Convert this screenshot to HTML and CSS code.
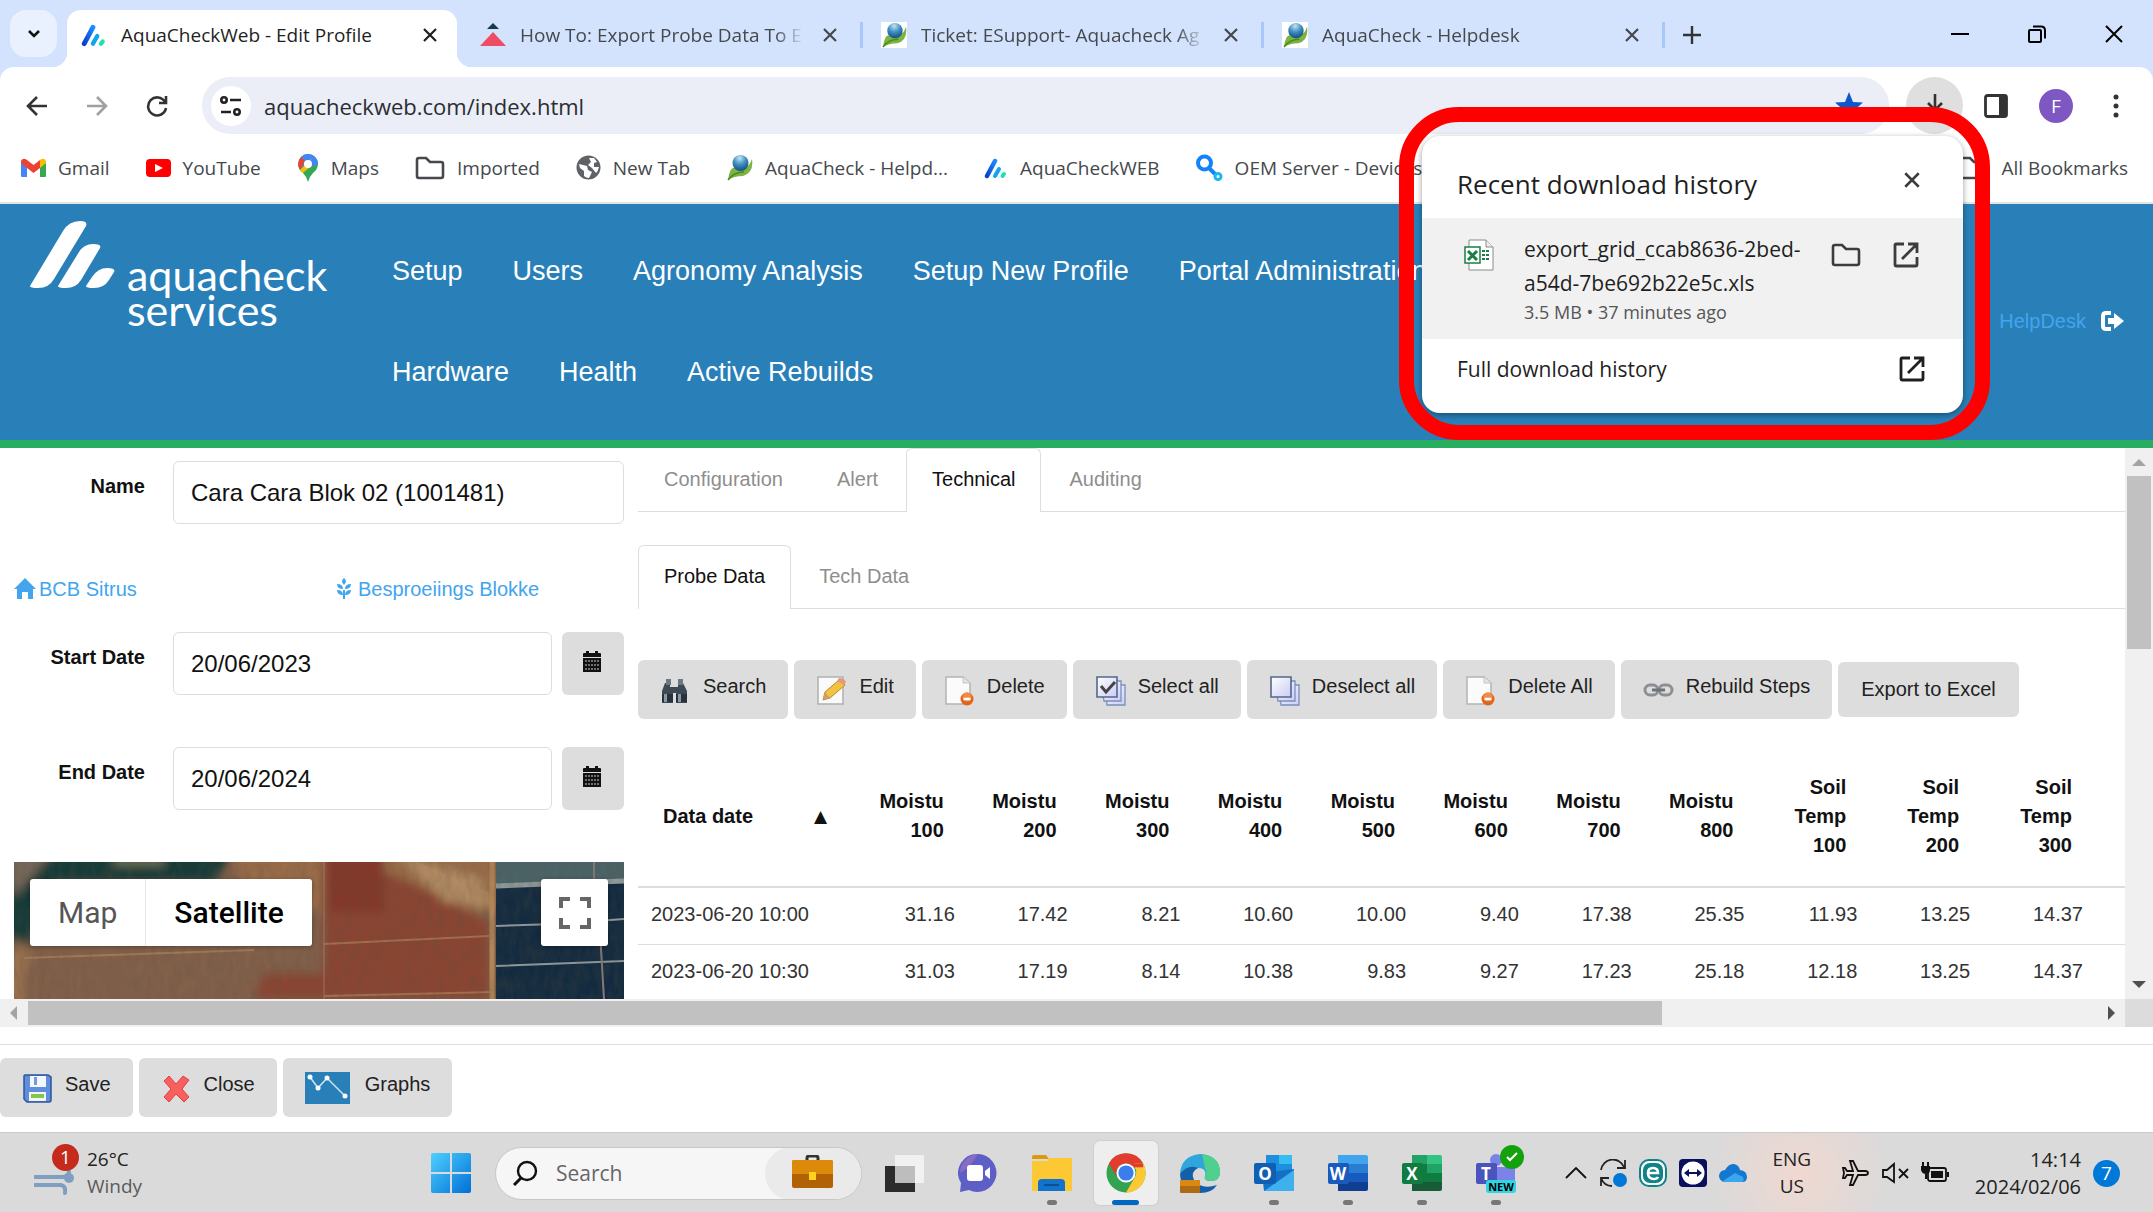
FILE: index.html
```html
<!DOCTYPE html>
<html lang="en">
<head>
    <meta charset="UTF-8">
    <meta name="viewport" content="width=device-width, initial-scale=1.0">
    <title>AquaCheckWeb - Edit Profile</title>
    <link rel="stylesheet" href="styles.css">
</head>
<body>
    <!-- shared icons -->
    <svg class="defs" width="0" height="0" aria-hidden="true">
        <defs>
            <linearGradient id="gBlue" x1="0" y1="1" x2="1" y2="0"><stop offset="0" stop-color="#0a3fd0"/><stop offset="1" stop-color="#1a8cff"/></linearGradient>
            <linearGradient id="gWin" x1="0" y1="0" x2="1" y2="1"><stop offset="0" stop-color="#4fd0ff"/><stop offset="1" stop-color="#0070d6"/></linearGradient>
            <linearGradient id="gPage" x1="0" y1="0" x2="1" y2="1"><stop offset="0" stop-color="#ffffff"/><stop offset="1" stop-color="#c9ccf5"/></linearGradient>
            <radialGradient id="gLeaf" cx=".45" cy=".2" r=".8"><stop offset="0" stop-color="#c4e4f2"/><stop offset=".5" stop-color="#3f8fc0"/><stop offset="1" stop-color="#124e80"/></radialGradient>
        </defs>
        <symbol id="x" viewBox="0 0 16 16"><path d="M2 2l12 12M14 2L2 14" fill="none" stroke="currentColor" stroke-width="2.2"/></symbol>
        <symbol id="folder" viewBox="0 0 30 24"><path d="M2 4q0-2 2-2h7l4 4h11q2 0 2 2v12q0 2-2 2H4q-2 0-2-2z" fill="none" stroke="currentColor" stroke-width="2.6"/></symbol>
        <symbol id="open" viewBox="0 0 28 28"><path d="M12 3H4q-1 0-1 1v20q0 1 1 1h20q1 0 1-1v-8M16 3h9v9M25 3L10 18" fill="none" stroke="currentColor" stroke-width="2.8"/></symbol>
        <symbol id="aqua" viewBox="0 0 24 22"><path d="M3 19L11 4" stroke="url(#gBlue)" stroke-width="4.5" stroke-linecap="round"/><path d="M11 19l4-7" stroke="#10a5ee" stroke-width="4" stroke-linecap="round"/><path d="M18.500 19l1.500-2" stroke="#1fe0b0" stroke-width="4" stroke-linecap="round"/></symbol>
        <symbol id="leaf" viewBox="0 0 27 27"><path d="M2 26Q4 12 9 14Q22 18 26 5Q28 19 17 22Q8 22 2 26z" fill="#7cb342"/><path d="M2 26Q8 18 18 18" stroke="#4b8a22" fill="none" stroke-width="1.500"/><ellipse cx="14.500" cy="9" rx="8" ry="8" fill="url(#gLeaf)"/></symbol>
        <symbol id="pageDel" viewBox="0 0 32 32"><path d="M2 3h17l7 6v21H2z" fill="#fbfbfb" stroke="#b4b4b4" stroke-width="1.500"/><path d="M19 3v6h7" fill="#e4e4e4" stroke="#c4c4c4"/><circle cx="23" cy="25" r="6.500" fill="#e0641a"/><circle cx="23" cy="23" r="4.500" fill="#f08c44"/><path d="M19.500 25h7" stroke="#fff" stroke-width="2.500"/></symbol>
        <symbol id="pages" viewBox="0 0 32 32"><g fill="url(#gPage)" stroke="#7a8fc0" stroke-width="1.300"><path d="M10 11h20v20H12z"/><path d="M6 7h20v20H9z"/><path d="M2 3h20v20H2z" stroke="#56678c" stroke-width="1.600"/></g></symbol>
        <symbol id="cal" viewBox="0 0 20 22"><path d="M1 3q0-1 1-1h2V0h3v2h6V0h3v2h2q1 0 1 1v3H1zM1 7h18v14H1z" fill="#111"/><path d="M3 10h14M3 14h14M3 18h14" stroke="#ccc" stroke-width="1" stroke-dasharray="2 1"/></symbol>
    </svg>

    <div class="tab-strip">
        <button class="tab-search" aria-label="Search tabs"><svg width="16" height="16" viewBox="0 0 16 16"><path d="M3 5l5 5 5-5" fill="none" stroke="#111" stroke-width="2.600"/></svg></button>
        <div class="tab active">
            <svg class="favicon"><use href="#aqua"/></svg>
            <span class="tab-title">AquaCheckWeb - Edit Profile</span>
            <button class="tab-close" aria-label="Close tab"><svg><use href="#x"/></svg></button>
        </div>
        <div class="tab">
            <svg class="favicon" viewBox="0 0 26 26"><path d="M13 1l6 6H7z" fill="#123c4a"/><path d="M13 10l13 14H0z" fill="#ee4b64"/></svg>
            <span class="tab-title">How To: Export Probe Data To E</span>
            <button class="tab-close" aria-label="Close tab"><svg><use href="#x"/></svg></button>
        </div>
        <div class="tab">
            <svg class="favicon white"><use href="#leaf"/></svg>
            <span class="tab-title">Ticket: ESupport- Aquacheck Ag</span>
            <button class="tab-close" aria-label="Close tab"><svg><use href="#x"/></svg></button>
        </div>
        <div class="tab">
            <svg class="favicon white"><use href="#leaf"/></svg>
            <span class="tab-title">AquaCheck - Helpdesk</span>
            <button class="tab-close" aria-label="Close tab"><svg><use href="#x"/></svg></button>
        </div>
        <button class="new-tab" aria-label="New tab"><svg width="18" height="18" viewBox="0 0 18 18"><path d="M9 0v18M0 9h18" stroke="#333" stroke-width="2.400"/></svg></button>
        <div class="window-controls">
            <button aria-label="Minimize"><svg viewBox="0 0 18 18"><path d="M0 9h18" stroke="#000" stroke-width="2"/></svg></button>
            <button aria-label="Restore"><svg viewBox="0 0 18 18"><path d="M2 5h10q1 0 1 1v10q0 1-1 1H3q-2 0-2-1V6q0-1 1-1zM5 1.500h8q4 0 4 4v8" fill="none" stroke="#000" stroke-width="2"/></svg></button>
            <button aria-label="Close"><svg viewBox="0 0 18 18"><path d="M1 1l16 16M17 1L1 17" stroke="#000" stroke-width="2"/></svg></button>
        </div>
    </div>

    <div class="toolbar">
        <div class="nav-buttons">
            <button aria-label="Back"><svg viewBox="0 0 22 22"><path d="M21 11H2M11 2l-9 9 9 9" fill="none" stroke="#333" stroke-width="2.600"/></svg></button>
            <button aria-label="Forward"><svg viewBox="0 0 22 22"><path d="M1 11h19M11 2l9 9-9 9" fill="none" stroke="#a0a0a0" stroke-width="2.600"/></svg></button>
            <button aria-label="Reload"><svg viewBox="0 0 22 22"><path d="M19 7A9 9 0 1 0 20 13M20 1v7h-7" fill="none" stroke="#333" stroke-width="2.600"/></svg></button>
        </div>
        <div class="omnibox">
            <span class="site-info"><svg width="22" height="20" viewBox="0 0 22 20"><g fill="none" stroke="#222" stroke-width="2.600"><circle cx="4" cy="4" r="2.700"/><path d="M10 4h11M1 16h10"/><circle cx="17" cy="16" r="2.700"/></g></svg></span>
            <input type="text" value="aquacheckweb.com/index.html" aria-label="Address">
            <svg class="star" viewBox="0 0 28 28"><path d="M14 0l4 10 10 .5-8 7 3 10.500-9-6-9 6 3-10.500-8-7L10 10z" fill="#0b57d0"/></svg>
        </div>
        <button class="download-btn" aria-label="Downloads"><svg width="22" height="28" viewBox="0 0 22 28"><path d="M11 2v16M4 11l7 7 7-7" fill="none" stroke="#333" stroke-width="2.600"/></svg></button>
        <button class="panel-btn" aria-label="Side panel"><svg width="24" height="24" viewBox="0 0 24 24"><rect x="1.500" y="1.500" width="21" height="21" rx="2" fill="none" stroke="#333" stroke-width="2.800"/><path d="M15 1h8v22h-8z" fill="#333"/></svg></button>
        <button class="avatar" aria-label="Profile">F</button>
        <button class="menu-btn" aria-label="Menu"><svg width="6" height="24" viewBox="0 0 6 24"><g fill="#333"><circle cx="3" cy="3" r="2.500"/><circle cx="3" cy="12" r="2.500"/><circle cx="3" cy="21" r="2.500"/></g></svg></button>
    </div>

    <div class="bookmarks">
        <a href="#"><svg width="25" height="20" viewBox="0 0 25 20"><path d="M0 3v15q0 1 1 1h5V9z" fill="#4285f4"/><path d="M25 3v15q0 1-1 1h-5V9z" fill="#34a853"/><path d="M19 2v8l6-5V3q-2-4-6-1z" fill="#fbbc04"/><path d="M0 5V3q2-4 6-1l6.500 5L19 2v8l-6.500 5L6 10z" fill="#ea4335"/></svg>Gmail</a>
        <a href="#"><svg width="25" height="18" viewBox="0 0 25 18"><rect width="25" height="18" rx="4" fill="#f00"/><path d="M9 5l8 4-8 4z" fill="#fff"/></svg>YouTube</a>
        <a href="#"><svg width="22" height="28" viewBox="0 0 20 28"><path d="M10 0a10 10 0 0 1 10 10q0 5-5 9-4 4-5 9-1-5-5-9-5-4-5-9A10 10 0 0 1 10 0z" fill="#34a853"/><path d="M3 3a10 10 0 0 1 13-1L6 14z" fill="#4285f4"/><path d="M3 3l4 4-5 9Q-2 9 3 3z" fill="#ea4335"/><path d="M2 16L14 4l-2 9-7 6z" fill="#fbbc04"/><path d="M16 2L10 9l4 4 6-3q0-5-4-8z" fill="#4285f4"/><circle cx="10" cy="10" r="4" fill="#fff"/></svg>Maps</a>
        <a href="#"><svg width="30" height="24" class="dark"><use href="#folder"/></svg>Imported</a>
        <a href="#"><svg width="25" height="25" viewBox="0 0 25 25"><circle cx="12.500" cy="12.500" r="12" fill="#5f6368"/><path d="M3 9l8 2 1 4 4 2-3 6q-3 0-5-2v-5l-4-3zM13 3h5l3 4-3 1v4h5q-1 4-3 6l-4-5-4-3 3-3z" fill="#fff"/></svg>New Tab</a>
        <a href="#"><svg width="27" height="27"><use href="#leaf"/></svg>AquaCheck - Helpd...</a>
        <a href="#"><svg width="24" height="22"><use href="#aqua"/></svg>AquaCheckWEB</a>
        <a href="#"><svg width="27" height="27" viewBox="0 0 27 27"><g fill="none" stroke="#1583f7"><circle cx="8.500" cy="9" r="6.500" stroke-width="4"/><path d="M13 14l6 6" stroke-width="4"/><circle cx="22" cy="22.500" r="3" stroke="#18b8f4" stroke-width="3"/></g></svg>OEM Server - Devices</a>
        <a href="#" class="all-bookmarks"><svg width="30" height="24" class="dark"><use href="#folder"/></svg>All Bookmarks</a>
    </div>

    <header class="site-header">
        <a href="#" class="logo">
            <svg width="85" height="68" viewBox="0 0 85 68"><g fill="#fff"><path d="M0 65L33 10Q39 0 50 0q8 0 6 5L24 58q-5 9-16 9-8 0-8-2z"/><path d="M28 65L49 31q5-8 14-8 9 0 7 4L51 59q-5 8-15 8-8 0-8-2z"/><path d="M56 65l6-9q6-9 15-9 9 0 7 4l-5 8q-5 8-15 8-8 0-8-2z"/></g></svg>
            <span class="logo-text">aquacheck<br>services</span>
        </a>
        <nav class="main-nav">
            <a href="#">Setup</a>
            <a href="#">Users</a>
            <a href="#">Agronomy Analysis</a>
            <a href="#">Setup New Profile</a>
            <a href="#">Portal Administration</a>
            <a href="#">Hardware</a>
            <a href="#">Health</a>
            <a href="#">Active Rebuilds</a>
        </nav>
        <div class="user-links">
            <a href="#">HelpDesk</a>
            <a href="#" aria-label="Log out"><svg width="23" height="20" viewBox="0 0 23 20"><path d="M10 2H5Q2 2 2 5v10q0 3 3 3h5" fill="none" stroke="#fff" stroke-width="4"/><path d="M7 7h6V2l10 8-10 8v-5H7z" fill="#fff"/></svg></a>
        </div>
    </header>

    <div class="workspace">
        <main class="content">
            <section class="profile-form">
                <div class="form-row">
                    <label for="name">Name</label>
                    <input id="name" type="text" value="Cara Cara Blok 02 (1001481)">
                </div>
                <div class="crumbs">
                    <a href="#"><svg width="22" height="21" viewBox="0 0 22 21"><path d="M11 0l11 11h-3v10h-5v-7H8v7H3V11H0z" fill="#42a5ee"/></svg>BCB Sitrus</a>
                    <a href="#" class="block-link"><svg width="14" height="21" viewBox="0 0 14 21"><g fill="#42a5ee"><path d="M7 0q4 3 0 7-4-4 0-7zM0 6q6 0 6 5-6 0-6-5zM14 6q-6 0-6 5 6 0 6-5zM0 12q6 0 6 5-6 0-6-5zM14 12q-6 0-6 5 6 0 6-5zM6 12h2v9H6z"/></g></svg>Besproeiings Blokke</a>
                </div>
                <div class="form-row">
                    <label for="start">Start Date</label>
                    <input id="start" type="text" value="20/06/2023">
                    <button class="cal-btn" aria-label="Pick start date"><svg width="20" height="22"><use href="#cal"/></svg></button>
                </div>
                <div class="form-row end-row">
                    <label for="end">End Date</label>
                    <input id="end" type="text" value="20/06/2024">
                    <button class="cal-btn" aria-label="Pick end date"><svg width="20" height="22"><use href="#cal"/></svg></button>
                </div>
                <div class="map">
                    <svg class="map-tiles" viewBox="0 0 610 137" preserveAspectRatio="none">
                        <defs>
                            <filter id="soft"><feGaussianBlur stdDeviation="5"/></filter>
                            <filter id="grain" x="0" y="0" width="1" height="1"><feTurbulence type="fractalNoise" baseFrequency=".16 .06" numOctaves="3" seed="4"/><feColorMatrix values="0 0 0 0 .1  0 0 0 0 .08  0 0 0 0 .05  .9 .5 0 0 -.5"/></filter>
                        </defs>
                        <rect width="610" height="137" fill="#82604a"/>
                        <g filter="url(#soft)">
                            <path d="M215 -10h270l0 60H240z" fill="#9a6c49"/>
                            <path d="M310 10l60 0 50 20 55 30v77H310z" fill="#8a4530"/>
                            <path d="M310 -10h60v60h-60z" fill="#84382a"/>
                            <path d="M-10 -10h230l-20 30H40L10 90h-20z" fill="#143a38"/>
                            <path d="M-10 -10h50L0 35z" fill="#75685a"/>
                            <path d="M100 0h50" stroke="#8a8a68" stroke-width="5"/>
                            <path d="M0 75l20 20-10 10v40h-20z" fill="#9b7250"/>
                            <path d="M240 137l10-25h60v25z" fill="#8a4430"/>
                            <path d="M385 -5l80 20 15 30-50-5z" fill="#b08a62"/>
                        </g>
                        <g fill="none" stroke="#b88a62" stroke-width="2" opacity=".6"><path d="M310 82l165-8M10 96l230-8M400 0l75 32M310 134l170-4"/></g>
                        <path d="M310 0v137" stroke="#b08a72" stroke-width="1" opacity=".7"/>
                        <path d="M478 0v137" stroke="#b28558" stroke-width="5"/>
                        <path d="M482 0h128v137H482z" fill="#132b40"/>
                        <path d="M482 0h128v18l-128 6z" fill="#4a6468"/>
                        <g stroke="#8f999c" fill="none"><path d="M482 24l128-5" stroke-width="5"/><path d="M482 64l60-2 68-5M482 104l128-5" stroke-width="2"/><path d="M580 0v26M586 70l4 67" stroke="#857a78" stroke-width="2"/></g>
                        <rect width="610" height="137" filter="url(#grain)" opacity=".4"/>
                    </svg>
                    <div class="map-overlay">
                        <div class="map-type">
                            <button>Map</button>
                            <button class="selected">Satellite</button>
                        </div>
                        <button class="fullscreen" aria-label="Toggle fullscreen"><svg width="32" height="32" viewBox="0 0 32 32"><path d="M2 11V2h9M21 2h9v9M30 21v9h-9M11 30H2v-9" fill="none" stroke="#666" stroke-width="4"/></svg></button>
                    </div>
                </div>
            </section>

            <section class="details">
                <ul class="tabs">
                    <li><a href="#">Configuration</a></li>
                    <li><a href="#">Alert</a></li>
                    <li class="current"><a href="#">Technical</a></li>
                    <li><a href="#">Auditing</a></li>
                </ul>
                <ul class="tabs sub-tabs">
                    <li class="current"><a href="#">Probe Data</a></li>
                    <li><a href="#">Tech Data</a></li>
                </ul>
                <div class="grid-actions">
                    <button class="btn"><svg viewBox="0 0 32 32"><path d="M2 29V17l3-8h5v4h8V9h5l4 8v12H16V19h-3v10z" fill="#3d4954"/><path d="M6 5h5v6H6zM18 5h5v6h-5z" fill="#6b7985"/><path d="M2 20h11v8H2zM16 20h11v8H16z" fill="#28323b"/><path d="M4 20h3v8H4zM18 20h3v8h-3z" fill="#8a98a5"/></svg><span>Search</span></button>
                    <button class="btn"><svg viewBox="0 0 32 32"><path d="M2 3h25v27H2z" fill="#fafafa" stroke="#b0b0b0" stroke-width="1.500"/><path d="M7 26l2-8L23 6l6 5-15 13z" fill="#f3c244" stroke="#b98a1c"/><path d="M7 26l2-8 5 6z" fill="#c9a070"/><path d="M21 7l2-3q5 0 7 4l-2 3z" fill="#e39a7a"/></svg><span>Edit</span></button>
                    <button class="btn"><svg><use href="#pageDel"/></svg><span>Delete</span></button>
                    <button class="btn"><svg viewBox="0 0 32 32"><use href="#pages"/><path d="M6 12l5 6 9-10" fill="none" stroke="#444" stroke-width="3"/></svg><span>Select all</span></button>
                    <button class="btn"><svg><use href="#pages"/></svg><span>Deselect all</span></button>
                    <button class="btn"><svg><use href="#pageDel"/></svg><span>Delete All</span></button>
                    <button class="btn"><svg viewBox="0 0 32 32"><g fill="none" stroke="#8c8f93" stroke-width="3"><rect x="2" y="11" width="13" height="10" rx="5"/><rect x="16" y="11" width="13" height="10" rx="5"/><path d="M9 16h13" stroke="#6f7276"/></g></svg><span>Rebuild Steps</span></button>
                    <button class="btn plain">Export to Excel</button>
                </div>
                <table class="probe-table">
                    <colgroup><col class="col-date"><col><col><col><col><col><col><col><col><col><col><col><col class="col-rest"></colgroup>
                    <thead>
                        <tr>
                            <th class="date-head"><div>Data date <span>▲</span></div></th>
                            <th>Moistu<br>100</th><th>Moistu<br>200</th><th>Moistu<br>300</th><th>Moistu<br>400</th>
                            <th>Moistu<br>500</th><th>Moistu<br>600</th><th>Moistu<br>700</th><th>Moistu<br>800</th>
                            <th>Soil<br>Temp<br>100</th><th>Soil<br>Temp<br>200</th><th>Soil<br>Temp<br>300</th><th></th>
                        </tr>
                    </thead>
                    <tbody>
                        <tr><td>2023-06-20 10:00</td><td>31.16</td><td>17.42</td><td>8.21</td><td>10.60</td><td>10.00</td><td>9.40</td><td>17.38</td><td>25.35</td><td>11.93</td><td>13.25</td><td>14.37</td><td></td></tr>
                        <tr><td>2023-06-20 10:30</td><td>31.03</td><td>17.19</td><td>8.14</td><td>10.38</td><td>9.83</td><td>9.27</td><td>17.23</td><td>25.18</td><td>12.18</td><td>13.25</td><td>14.37</td><td></td></tr>
                    </tbody>
                </table>
            </section>
        </main>
        <div class="scroll-y"><i class="arrow up"></i><div class="thumb"></div><i class="arrow down"></i></div>
        <div class="scroll-x"><i class="arrow left"></i><div class="thumb"></div><i class="arrow right"></i></div>
        <div class="scroll-corner"></div>
    </div>

    <footer class="form-actions">
        <button class="btn"><svg viewBox="0 0 32 32"><path d="M2 4q0-1 1-1h23l3 2v23q0 2-2 2H5l-3-3z" fill="#5f8fdc" stroke="#2f569c" stroke-width="1.500"/><path d="M8 4h16v11H8z" fill="#f2f6ff"/><path d="M12 5h3v8h-3z" fill="#7b99cc"/><path d="M7 20h17v9H7z" fill="#f4f4f4"/><path d="M9 22h13v4H9z" fill="#7ec850"/></svg><span>Save</span></button>
        <button class="btn"><svg viewBox="0 0 32 32"><path d="M3 9l5-5 7 8 7-8 6 4-7 9 7 8-5 5-8-8-7 8-5-5 7-8z" fill="#f8605f" stroke="#e2403f"/></svg><span>Close</span></button>
        <button class="btn graphs"><svg viewBox="0 0 45 32"><path d="M0 0h45v32H0z" fill="#2980b9"/><path d="M5 5l8 11 9-10 18 18" fill="none" stroke="#cfe6f5" stroke-width="1.500"/><g fill="#fff"><circle cx="5" cy="5" r="2.500"/><circle cx="13" cy="16" r="2.500"/><circle cx="22" cy="6" r="2.500"/><circle cx="40" cy="24" r="2.500"/></g></svg><span>Graphs</span></button>
    </footer>

    <div class="taskbar">
        <div class="weather">
            <div class="weather-icon">
                <svg width="40" height="34" viewBox="0 0 40 34"><path d="M1 13h27q6 0 7-5M1 21h26q5 1 4 8" fill="none" stroke="#7f9fc0" stroke-width="4" stroke-linecap="round"/><circle cx="35" cy="14" r="5" fill="#7f9fc0"/></svg>
                <span class="badge">1</span>
            </div>
            <div class="weather-text">26°C<br><span>Windy</span></div>
        </div>
        <button class="start" aria-label="Start"><svg width="40" height="40" viewBox="0 0 40 40"><path d="M0 2q0-2 2-2h17v19H0zM21 0h17q2 0 2 2v17H21zM0 21h19v19H2q-2 0-2-2zM21 21h19v17q0 2-2 2H21z" fill="url(#gWin)"/></svg></button>
        <div class="task-search">
            <svg width="26" height="26" viewBox="0 0 26 26"><circle cx="15" cy="11" r="9" fill="none" stroke="#111" stroke-width="2.400"/><path d="M9 18l-7 7" stroke="#111" stroke-width="3"/></svg>
            <input type="text" placeholder="Search" aria-label="Search">
            <span class="briefcase"><svg width="41" height="34" viewBox="0 0 41 34"><path d="M15 6V3q0-2 2-2h7q2 0 2 2v3" fill="none" stroke="#333" stroke-width="3"/><rect y="5" width="41" height="28" rx="2" fill="#b06204"/><path d="M0 7q0-2 2-2h37q2 0 2 2v12H0z" fill="#dc8a0a"/><path d="M17 17h7v8h-7z" fill="#ffd21f"/></svg></span>
        </div>
        <div class="apps">
            <button aria-label="Task view"><svg viewBox="0 0 40 40"><path d="M1 13h30v26H1z" fill="#2c2c2c"/><path d="M11 2h29v28H11z" fill="#f4f4f4" opacity=".85"/><path d="M11 13h20v17H11z" fill="#bdbdbd"/></svg></button>
            <button aria-label="Chat"><svg viewBox="0 0 40 40"><path d="M20 1a19 19 0 1 1-9 36L2 39l1-9A19 19 0 0 1 20 1z" fill="#5d5fc7"/><path d="M20 1a19 19 0 0 0-18 19q9-4 18-19z" fill="#8a6bc4"/><rect x="9" y="12" width="16" height="16" rx="3" fill="#fff"/><path d="M27 18l5-4v12l-5-4z" fill="#fff"/></svg></button>
            <button aria-label="File Explorer" class="running"><svg viewBox="0 0 40 40"><path d="M0 4q0-2 2-2h12l3 4H0z" fill="#d99a10"/><path d="M0 8h15l2-3h23v33H0z" fill="#fcc934"/><path d="M6 38V30q0-4 4-4h19q4 0 4 4v8z" fill="#1273cc"/><path d="M12 32h15" stroke="#0b4f94" stroke-width="2"/></svg></button>
            <button aria-label="Chrome" class="running focused"><svg viewBox="0 0 42 42"><circle cx="21" cy="21" r="20.500" fill="#33a352"/><path d="M3 11A20.500 20.500 0 0 1 39 11H21a10 10 0 0 0-9 15z" fill="#e33b2e"/><path d="M39 11a20.500 20.500 0 0 1-18 30.500L30 26a10 10 0 0 0 0-11V11z" fill="#fcc934"/><path d="M21 11h18v4H21z" fill="#e33b2e"/><circle cx="21" cy="21" r="10" fill="#fff"/><circle cx="21" cy="21" r="8" fill="#3b7ded"/></svg></button>
            <button aria-label="Edge"><svg viewBox="0 0 40 40"><path d="M0 21Q1 3 20 1q19 1 20 18 0 9-9 9-8 0-6-5 2-8-7-8Q9 16 0 21z" fill="#2fa5dc"/><path d="M22 1q18 3 18 18 0 9-9 9-8 0-6-5 3-3 0-8z" fill="#4fd08c"/><path d="M0 21q8-10 18-6-8 4-4 12 7 10 23 5-5 8-17 8Q1 39 0 21z" fill="#155fa8"/><rect x="0" y="27" width="20" height="13" rx="1" fill="#b06a12"/><path d="M0 27h20v6H0z" fill="#d98a16"/></svg></button>
            <button aria-label="Outlook" class="running"><svg viewBox="0 0 40 40"><path d="M12 2h26v18H12z" fill="#1e8fdc"/><path d="M25 2h13v9H25z" fill="#38bdf2"/><path d="M8 20l32-4v20q0 2-2 2H10z" fill="#1470c4"/><path d="M10 38l30-21v19q0 2-2 2z" fill="#3fb0ee"/><rect y="10" width="22" height="21" rx="2" fill="#0f5fb5"/><text x="11" y="27" class="app-letter">O</text></svg></button>
            <button aria-label="Word" class="running"><svg viewBox="0 0 40 40"><path d="M10 2h28q2 0 2 2v8H10z" fill="#41a5ee"/><path d="M10 11h30v9H10z" fill="#2b7cd3"/><path d="M10 20h30v9H10z" fill="#185abd"/><path d="M10 29h30v7q0 2-2 2H10z" fill="#103f91"/><rect y="10" width="21" height="21" rx="2" fill="#185abd"/><text x="10" y="27" class="app-letter">W</text></svg></button>
            <button aria-label="Excel" class="running"><svg viewBox="0 0 40 40"><path d="M10 2h15v9H10z" fill="#21a366"/><path d="M25 2h13q2 0 2 2v7H25z" fill="#33c481"/><path d="M10 11h15v18H10z" fill="#107c41"/><path d="M25 11h15v9H25z" fill="#21a366"/><path d="M25 20h15v9H25z" fill="#107c41"/><path d="M10 29h30v7q0 2-2 2H10z" fill="#185c37"/><rect y="10" width="21" height="21" rx="2" fill="#107c41"/><text x="10" y="27" class="app-letter">X</text></svg></button>
            <button aria-label="Teams" class="running"><svg viewBox="0 0 40 40"><circle cx="20" cy="7" r="6" fill="#7b83eb"/><path d="M12 14h27v14q-3 10-14 10-9-1-13-9z" fill="#7b83eb"/><rect y="10" width="21" height="21" rx="2" fill="#4b53bc"/><text x="10" y="27" class="app-letter">T</text></svg><span class="new-badge">NEW</span><span class="ok-badge"><svg width="12" height="10" viewBox="0 0 12 10"><path d="M1 5l3 3 7-7" fill="none" stroke="#fff" stroke-width="2"/></svg></span></button>
        </div>
        <div class="tray">
            <svg width="22" height="12" viewBox="0 0 22 12"><path d="M1 11L11 1l10 10" fill="none" stroke="#111" stroke-width="1.800"/></svg>
            <svg width="28" height="28" viewBox="0 0 28 28"><path d="M2 11A12 12 0 0 1 25 8M26 1v8h-8M2 27v-8h8M2 19q3 8 11 8" fill="none" stroke="#222" stroke-width="1.800"/><circle cx="21" cy="21" r="7" fill="#0078d7"/></svg>
            <svg width="28" height="28" viewBox="0 0 28 28"><rect x="1" y="1" width="26" height="26" rx="9" fill="#fff" stroke="#0f8387" stroke-width="2"/><rect x="4" y="4" width="20" height="20" rx="7" fill="#0f8387"/><path d="M9 14h10q0-5-5-5t-5 5q0 6 6 6 3 0 4-2" fill="none" stroke="#fff" stroke-width="2.600"/></svg>
            <svg width="28" height="28" viewBox="0 0 28 28"><rect width="28" height="28" rx="4" fill="#0a0f5c"/><circle cx="14" cy="14" r="11.500" fill="#fff"/><path d="M5 14l5-4v3h8v-3l5 4-5 4v-3h-8v3z" fill="#0a0f5c"/></svg>
            <svg width="28" height="20" viewBox="0 0 28 20"><path d="M6 19a6 6 0 0 1 0-12Q10 0 15 1q5 1 6 6 7 1 7 7 0 5-5 5z" fill="#1478d0"/><path d="M4 18l12-8 8 4q2 5-2 5H6z" fill="#38a7ee"/></svg>
            <span class="lang">ENG<br>US</span>
            <svg width="28" height="28" viewBox="0 0 28 28"><path d="M27 14q0-2-3-2h-7L12 2H9l3 10H6L4 9H2l1 5-1 5h2l2-3h6L9 26h3l5-10h7q3 0 3-2z" fill="none" stroke="#111" stroke-width="1.800"/></svg>
            <svg width="28" height="22" viewBox="0 0 28 22"><path d="M2 8v7h4l7 5V2L6 8zM18 7l9 9M27 7l-9 9" fill="none" stroke="#111" stroke-width="1.800"/></svg>
            <svg width="28" height="22" viewBox="0 0 28 22"><rect x="7" y="6" width="18" height="13" rx="2" fill="none" stroke="#111" stroke-width="1.800"/><path d="M10 9h12v7H10zM26 10h2v5h-2z" fill="#111"/><path d="M0 4h9v4q0 4-4 4t-5-4zM1 0h2v4H1zM6 0h2v4H6zM4 11h2v6H4z" fill="#111"/></svg>
            <span class="clock">14:14<br>2024/02/06</span>
            <span class="notif">7</span>
        </div>
    </div>

    <div class="download-popup">
        <div class="popup-head">
            <h2>Recent download history</h2>
            <button aria-label="Close"><svg width="18" height="18"><use href="#x"/></svg></button>
        </div>
        <div class="popup-item">
            <svg class="file-icon" width="30" height="32" viewBox="0 0 30 32"><path d="M5 1h17l7 7v23H5z" fill="#fff" stroke="#8a8a8a"/><path d="M22 1v7h7" fill="#eee" stroke="#8a8a8a"/><path d="M18 12h8M18 16h8M18 20h8" stroke="#1a7f43" stroke-width="2" stroke-dasharray="3 1"/><rect x="1" y="8" width="15" height="16" fill="#fff" stroke="#1a7f43" stroke-width="1.500"/><path d="M4 12l9 9M13 12l-9 9" stroke="#1a7f43" stroke-width="3"/></svg>
            <div class="file-info">
                <a href="#">export_grid_ccab8636-2bed-<br>a54d-7be692b22e5c.xls</a>
                <p>3.5 MB • 37 minutes ago</p>
            </div>
            <button class="show-folder" aria-label="Show in folder"><svg width="30" height="24"><use href="#folder"/></svg></button>
            <button class="open-file" aria-label="Open"><svg width="28" height="28"><use href="#open"/></svg></button>
        </div>
        <a href="#" class="popup-foot">Full download history <svg width="28" height="28"><use href="#open"/></svg></a>
    </div>
    <div class="highlight"></div>
</body>
</html>
```
FILE: styles.css
```css
* {
    box-sizing: border-box;
}
body {
    margin: 0;
    height: 100vh;
    display: flex;
    flex-direction: column;
    position: relative;
    overflow: hidden;
    background: #fff;
    color: #111;
    font-family: "Liberation Sans", Arial, sans-serif;
    font-size: 20px;
}
button, input {
    font: inherit;
    color: inherit;
    border: none;
    background: none;
    padding: 0;
    margin: 0;
}
button {
    cursor: pointer;
    flex: none;
}
a {
    color: inherit;
    text-decoration: none;
}
svg {
    display: block;
    flex: none;
}
.defs {
    position: absolute;
}

/* browser frame */
.tab-strip, .toolbar, .bookmarks, .taskbar, .download-popup {
    font-family: "Open Sans", "Noto Sans", sans-serif;
    font-size: 19px;
}
.tab-strip {
    display: flex;
    align-items: flex-end;
    height: 67px;
    padding-left: 10px;
    background: #d3e3fd;
    flex: none;
}
.tab-search {
    width: 47px;
    height: 47px;
    margin: 0 10px 10px 0;
    border-radius: 16px;
    background: #e9f1fe;
    display: flex;
    align-items: center;
    justify-content: center;
}
.tab {
    position: relative;
    width: 401px;
    height: 57px;
    padding: 0 24px 8px 19px;
    display: flex;
    align-items: center;
    color: #45494d;
}
.tab:not(.active)::after {
    content: "";
    position: absolute;
    right: -1px;
    top: 12px;
    width: 3px;
    height: 26px;
    background: #a8c7fa;
}
.tab.active {
    width: 390px;
    margin-right: 4px;
    padding: 0 19px 8px 14px;
    background: #fff;
    border-radius: 14px 14px 0 0;
    color: #1f1f1f;
}
.tab.active::before, .tab.active::after {
    content: "";
    position: absolute;
    bottom: 0;
    left: -14px;
    width: 14px;
    height: 14px;
    background: radial-gradient(circle at 0 0, transparent 14px, #fff 14px);
}
.tab.active::after {
    left: auto;
    right: -14px;
    background: radial-gradient(circle at 100% 0, transparent 14px, #fff 14px);
}
.favicon {
    width: 26px;
    height: 26px;
    margin-right: 14px;
}
.favicon.white {
    background: #fff;
}
.tab-title {
    flex: 1;
    white-space: nowrap;
    margin-right: 12px;
    -webkit-mask-image: linear-gradient(to right, #000 88%, transparent 98%);
    mask-image: linear-gradient(to right, #000 88%, transparent 98%);
}
.active .tab-title {
    -webkit-mask-image: none;
    mask-image: none;
}
.tab-close svg {
    width: 16px;
    height: 16px;
}
.new-tab {
    height: 57px;
    padding: 0 20px 8px 19px;
}
.window-controls {
    display: flex;
    gap: 59px;
    margin-left: auto;
    padding: 0 30px 24px 0;
}
.window-controls svg {
    width: 18px;
    height: 18px;
}
.toolbar {
    display: flex;
    align-items: center;
    height: 77px;
    padding: 0 34px 0 26px;
    background: linear-gradient(#d3e3fd, #d3e3fd) top / 100% 14px no-repeat, #fff;
    position: relative;
    flex: none;
}
.toolbar::before {
    content: "";
    position: absolute;
    inset: 0;
    background: #fff;
    border-radius: 14px 14px 0 0;
}
.toolbar > * {
    position: relative;
}
.nav-buttons {
    display: flex;
    gap: 38px;
    width: 176px;
}
.nav-buttons svg {
    width: 22px;
    height: 22px;
}
.omnibox {
    flex: 1;
    display: flex;
    align-items: center;
    height: 57px;
    padding: 0 26px 0 9px;
    border-radius: 28px;
    background: #ebeef7;
    font-size: 22px;
    color: #2a2d31;
}
.site-info {
    width: 40px;
    height: 40px;
    margin-right: 13px;
    border-radius: 50%;
    background: #fff;
    display: flex;
    align-items: center;
    justify-content: center;
}
.omnibox input {
    flex: 1;
}
.star {
    width: 28px;
    height: 28px;
}
.download-btn {
    width: 57px;
    height: 57px;
    margin: 0 21px 0 17px;
    border-radius: 50%;
    background: #dfdfdf;
    display: flex;
    align-items: center;
    justify-content: center;
}
.avatar {
    width: 34px;
    height: 34px;
    margin: 0 40px 0 31px;
    border-radius: 50%;
    background: #7e57c2;
    color: #fff;
}
.bookmarks {
    display: flex;
    align-items: center;
    gap: 36px;
    height: 60px;
    padding: 0 25px 11px 21px;
    border-bottom: 2px solid #e3e5e5;
    color: #45494d;
    white-space: nowrap;
    flex: none;
}
.bookmarks a {
    display: flex;
    align-items: center;
    gap: 12px;
}
.bookmarks .all-bookmarks {
    margin-left: auto;
}
.dark {
    color: #45494d;
}

/* site header */
.site-header {
    display: flex;
    height: 244px;
    padding: 17px 29px 0 30px;
    background: #2980b9;
    border-bottom: 8px solid #27ae60;
    color: #fff;
    flex: none;
}
.logo {
    display: flex;
    width: 362px;
    flex: none;
}
.logo-text {
    padding: 36px 0 0 12px;
    font: 43px/35px Lato, sans-serif;
}
.main-nav {
    flex: 1;
    display: flex;
    flex-wrap: wrap;
    align-content: flex-start;
    gap: 0 50px;
    font-size: 27px;
    line-height: 101px;
}
.user-links {
    display: flex;
    align-items: center;
    align-self: flex-start;
    justify-content: flex-end;
    gap: 15px;
    width: 560px;
    height: 200px;
    color: #42a5ee;
}

/* workspace */
.workspace {
    flex: 1;
    min-height: 0;
    display: grid;
    grid-template-columns: minmax(0, 1fr) 28px;
    grid-template-rows: minmax(0, 1fr) 28px;
}
.content {
    display: flex;
    gap: 14px;
    padding-left: 14px;
    overflow: hidden;
}
.profile-form {
    width: 610px;
    padding-top: 13px;
    flex: none;
}
.form-row {
    display: flex;
    align-items: center;
    height: 63px;
}
.form-row label {
    width: 131px;
    margin-right: 28px;
    padding-bottom: 12px;
    text-align: right;
    font-weight: bold;
}
.form-row input {
    flex: 1;
    height: 63px;
    padding: 0 17px;
    border: 1px solid #ddd;
    border-radius: 6px;
    font-size: 24px;
    min-width: 0;
}
.cal-btn {
    width: 62px;
    height: 63px;
    margin-left: 10px;
    padding: 0 20px 4px;
    border-radius: 6px;
    background: #ddd;
}
.end-row {
    margin: 52px 0;
}
.crumbs {
    display: flex;
    height: 108px;
    padding-top: 22px;
    align-items: center;
    color: #42a5ee;
}
.crumbs a {
    display: flex;
    gap: 3px;
    width: 323px;
}
.crumbs .block-link {
    width: auto;
    gap: 7px;
}
.map {
    position: relative;
    height: 400px;
    overflow: hidden;
}
.map-tiles {
    width: 100%;
    height: 137px;
}
.map-overlay {
    position: absolute;
    inset: 17px 16px auto 16px;
    display: flex;
    justify-content: space-between;
}
.map-type, .fullscreen {
    height: 67px;
    background: #fff;
    border-radius: 3px;
    box-shadow: 0 1px 4px rgba(0, 0, 0, 0.3);
}
.map-type {
    display: flex;
    font: 30px Roboto, sans-serif;
    color: #565656;
}
.map-type button {
    padding: 0 28px;
}
.map-type .selected {
    border-left: 1px solid #e6e6e6;
    font-weight: 500;
    color: #000;
}
.fullscreen {
    width: 67px;
    display: flex;
    align-items: center;
    justify-content: center;
}
.details {
    flex: 1;
    min-width: 0;
}
.tabs {
    display: flex;
    gap: 2px;
    height: 64px;
    margin: 0;
    padding: 0;
    border-bottom: 1px solid #ddd;
    list-style: none;
    line-height: 60px;
    color: #8e8e8e;
}
.tabs li {
    height: 64px;
    padding: 0 25px;
    border: 1px solid transparent;
    border-bottom: none;
    border-radius: 6px 6px 0 0;
}
.tabs .current {
    border-color: #ddd;
    background: #fff;
    color: #111;
}
.sub-tabs {
    margin-top: 33px;
}
.grid-actions {
    display: flex;
    align-items: center;
    gap: 6px;
    margin-top: 51px;
    white-space: nowrap;
}
.btn {
    display: flex;
    gap: 11px;
    height: 59px;
    padding: 14px 22px 0;
    border-radius: 6px;
    background: #ddd;
    color: #222;
}
.btn span {
    line-height: 25px;
}
.btn svg {
    width: 32px;
    height: 32px;
}
.btn.plain {
    height: 55px;
    padding: 14px 23px;
    line-height: 26px;
}
.probe-table {
    width: 100%;
    margin-top: 27px;
    border-collapse: collapse;
    table-layout: fixed;
    text-align: right;
}
.col-date {
    width: 216px;
}
.col-rest {
    width: 30px;
}
.probe-table th {
    height: 141px;
    padding: 0 23px 0 0;
    line-height: 29px;
    border-bottom: 2px solid #ddd;
}
.probe-table .date-head {
    padding: 0 27px 0 25px;
}
.date-head div {
    display: flex;
    justify-content: space-between;
}
.date-head span {
    font-family: "DejaVu Sans", sans-serif;
    font-size: 17px;
}
.probe-table td {
    height: 57px;
    padding: 0 12px 2px 0;
    border-bottom: 1px solid #ddd;
    color: #333;
}
.probe-table td:first-child {
    padding-left: 13px;
    text-align: left;
}

/* scroll bars */
.scroll-y, .scroll-x {
    display: flex;
    align-items: center;
    background: #f0f0f0;
}
.scroll-y {
    flex-direction: column;
    padding: 11px 0;
}
.scroll-y .thumb {
    width: 24px;
    height: 173px;
    margin: 10px 0 auto;
    background: #c1c1c1;
}
.scroll-x {
    padding: 0 10px;
}
.scroll-x .thumb {
    width: calc(78% - 8px);
    height: 24px;
    margin: 0 auto 0 11px;
    background: #c1c1c1;
}
.arrow {
    border: 7px solid transparent;
    width: 0;
    height: 0;
}
.arrow.up {
    border-top: none;
    border-bottom-color: #a3a3a3;
}
.arrow.down {
    border-bottom: none;
    border-top-color: #505050;
}
.arrow.left {
    border-left: none;
    border-right-color: #a3a3a3;
}
.arrow.right {
    border-right: none;
    border-left-color: #505050;
}
.scroll-corner {
    background: #dcdcdc;
}

.form-actions {
    display: flex;
    gap: 6px;
    height: 88px;
    margin-top: 17px;
    padding-top: 13px;
    border-top: 1px solid #ddd;
    flex: none;
}
.btn.graphs svg {
    width: 45px;
}
.btn.graphs {
    gap: 15px;
}

/* taskbar */
.taskbar {
    display: flex;
    align-items: center;
    height: 80px;
    padding: 1px 33px 0 34px;
    background: radial-gradient(ellipse 90px 90px at 1800px 40px, #f0d8d0, rgba(240, 216, 208, 0)), #dadada;
    border-top: 1px solid #cacaca;
    line-height: 27px;
    color: #222;
    flex: none;
}
.weather {
    display: flex;
    gap: 13px;
    width: 397px;
}
.weather-icon {
    position: relative;
    padding-top: 18px;
}
.badge {
    position: absolute;
    top: -2px;
    left: 18px;
    width: 27px;
    height: 27px;
    border-radius: 50%;
    background: #c42b1c;
    color: #fff;
    text-align: center;
}
.weather-text span {
    color: #5a5a5a;
}
.task-search {
    display: flex;
    align-items: center;
    width: 367px;
    height: 53px;
    margin-left: 24px;
    padding-left: 16px;
    border: 1px solid #c6c6c6;
    border-radius: 27px;
    background: #f6f6f6;
    overflow: hidden;
    font-size: 21px;
}
.task-search input {
    flex: 1;
    min-width: 0;
    margin-left: 18px;
}
.task-search input::placeholder {
    color: #666;
    opacity: 1;
}
.briefcase {
    width: 96px;
    height: 53px;
    padding: 8px 27px;
    border-radius: 27px;
    background: #eaeaea;
}
.apps {
    display: flex;
    gap: 10px;
    margin-left: 10px;
}
.apps button {
    position: relative;
    width: 64px;
    height: 64px;
    padding: 0 12px;
    border-radius: 6px;
}
.apps button > svg {
    width: 40px;
    height: 40px;
}
.app-letter {
    font: bold 17px "Open Sans", sans-serif;
    fill: #fff;
    text-anchor: middle;
}
.running::after {
    content: "";
    position: absolute;
    bottom: 0;
    left: 27px;
    width: 10px;
    height: 5px;
    border-radius: 3px;
    background: #777;
}
.apps .focused {
    background: #eee;
    box-shadow: 0 0 0 1px #cfcfcf;
}
.focused::after {
    left: 18px;
    width: 27px;
    background: #0067c0;
}
.new-badge {
    position: absolute;
    left: 22px;
    bottom: 12px;
    width: 30px;
    border-radius: 3px;
    background: #2fd6e0;
    color: #000;
    font-size: 11px;
    font-weight: bold;
    line-height: 13px;
    text-align: center;
}
.ok-badge {
    position: absolute;
    top: 4px;
    right: 4px;
    width: 24px;
    height: 24px;
    padding: 7px 6px;
    border-radius: 50%;
    background: #13a10e;
}
.tray {
    display: flex;
    align-items: center;
    gap: 12px;
    margin-left: auto;
}
.lang {
    width: 58px;
    margin: 0 8px 0 4px;
    text-align: center;
}
.clock {
    margin-left: 14px;
    font-size: 20px;
    text-align: right;
}
.notif {
    width: 27px;
    height: 27px;
    border-radius: 50%;
    background: #0078d7;
    color: #fff;
    text-align: center;
}

/* downloads bubble */
.download-popup {
    position: absolute;
    top: 136px;
    right: 190px;
    width: 541px;
    height: 277px;
    border-radius: 18px;
    background: #fff;
    box-shadow: 0 2px 6px rgba(0, 0, 0, 0.4);
    color: #1f1f1f;
}
.popup-head {
    display: flex;
    justify-content: space-between;
    height: 82px;
    padding: 30px 42px 0 35px;
}
.popup-head h2 {
    margin: 0;
    font-size: 26px;
    font-weight: 500;
    line-height: 36px;
}
.popup-head button {
    height: 28px;
}
.download-popup button {
    color: #3c3c3c;
}
.popup-item {
    display: flex;
    height: 121px;
    padding: 14px 43px 0 42px;
    background: #f1f1f1;
}
.file-icon {
    margin: 7px 30px 0 0;
}
.file-info {
    flex: 1;
    font-size: 21px;
    font-weight: 500;
    line-height: 34px;
    white-space: nowrap;
}
.file-info p {
    margin: 0;
    font-size: 18px;
    font-weight: normal;
    line-height: 25px;
    color: #555;
}
.show-folder, .open-file {
    height: 46px;
    margin-right: 31px;
}
.open-file {
    margin-right: 0;
}
.popup-foot {
    display: flex;
    justify-content: space-between;
    align-items: center;
    height: 60px;
    padding: 0 37px 0 35px;
    font-size: 21px;
    font-weight: 500;
}
.highlight {
    position: absolute;
    top: 107px;
    right: 163px;
    width: 591px;
    height: 333px;
    border: 15px solid #f00;
    border-radius: 60px;
    pointer-events: none;
}
```
